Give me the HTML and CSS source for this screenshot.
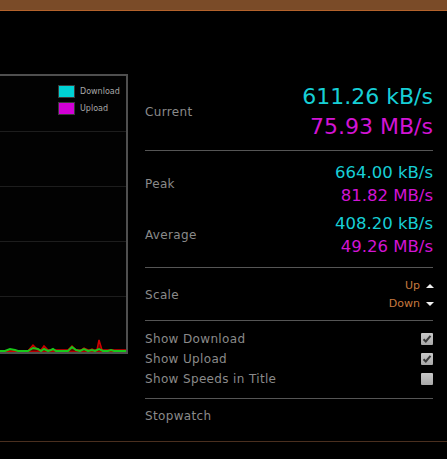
FILE: index.html
```html
<!DOCTYPE html>
<html>
<head>
<meta charset="utf-8">
<link rel="stylesheet" href="styles.css">
</head>
<body>
<div class="topbar"></div>
<div class="main">
  <div class="chart">
    <svg class="plot" width="126" height="276" viewBox="0 0 126 276">
      <g stroke="#1d1d1d" stroke-width="1">
        <line x1="0" y1="55.5" x2="126" y2="55.5"/>
        <line x1="0" y1="110.5" x2="126" y2="110.5"/>
        <line x1="0" y1="165.5" x2="126" y2="165.5"/>
        <line x1="0" y1="220.5" x2="126" y2="220.5"/>
      </g>
      <polygon fill="#6a0000" stroke="#d00000" stroke-width="1.5" points="0,275 28,275 33,269 38,274 41,274 44,270 48,274 68,274 72,270 76,274 81,274 84,272 88,274 90,274 92,273 94,274 97,274 99,264 102,274 126,274 126,276 0,276"/>
      <polyline fill="none" stroke="#18c818" stroke-width="2" points="0,275 5,275 10,273 15,274 18,275 28,275 33,272 38,273 41,275 44,273 48,275 51,274 53,273 56,275 68,275 72,271 76,274 80,275 84,273 88,275 92,274 95,275 99,273 103,275 108,275 111,274 114,275 126,275"/>
    </svg>
    <div class="legend">
      <div class="legend-item"><span class="swatch swatch-down"></span><span>Download</span></div>
      <div class="legend-item"><span class="swatch swatch-up"></span><span>Upload</span></div>
    </div>
  </div>
  <div class="panel">
    <div class="section sec-current">
      <div class="row">
        <div class="label">Current</div>
        <div class="values big">
          <div class="cyan">611.26 kB/s</div>
          <div class="magenta">75.93 MB/s</div>
        </div>
      </div>
    </div>
    <div class="section sec-stats">
      <div class="row">
        <div class="label">Peak</div>
        <div class="values mid">
          <div class="cyan">664.00 kB/s</div>
          <div class="magenta">81.82 MB/s</div>
        </div>
      </div>
      <div class="row">
        <div class="label">Average</div>
        <div class="values mid">
          <div class="cyan">408.20 kB/s</div>
          <div class="magenta">49.26 MB/s</div>
        </div>
      </div>
    </div>
    <div class="section sec-scale">
      <div class="row">
        <div class="label">Scale</div>
        <div class="values small">
          <div class="scale-btn">Up <span class="tri tri-up"></span></div>
          <div class="scale-btn">Down <span class="tri tri-down"></span></div>
        </div>
      </div>
    </div>
    <div class="section sec-checks">
      <div class="check-row"><span class="label">Show Download</span><span class="cb checked"><svg width="10" height="10" viewBox="0 0 10 10"><path d="M1.5 5.2 L3.8 7.5 L8.5 1.8" fill="none" stroke="#3a3a3a" stroke-width="2"/></svg></span></div>
      <div class="check-row"><span class="label">Show Upload</span><span class="cb checked"><svg width="10" height="10" viewBox="0 0 10 10"><path d="M1.5 5.2 L3.8 7.5 L8.5 1.8" fill="none" stroke="#3a3a3a" stroke-width="2"/></svg></span></div>
      <div class="check-row"><span class="label">Show Speeds in Title</span><span class="cb"></span></div>
    </div>
    <div class="section sec-stopwatch">
      <div class="check-row"><span class="label">Stopwatch</span></div>
    </div>
  </div>
</div>
</body>
</html>
```
FILE: styles.css
```css
html, body {
  margin: 0;
  padding: 0;
  background: #000;
}
body {
  width: 447px;
  height: 459px;
  overflow: hidden;
  font-family: "DejaVu Sans", sans-serif;
}
.topbar {
  height: 10px;
  background: #7a4b28;
  border-bottom: 1px solid #b3622b;
}
.main {
  display: flex;
  gap: 17px;
  height: 430px;
  border-bottom: 1px solid #4a2f1f;
}
.chart {
  position: relative;
  margin-top: 63px;
  width: 126px;
  height: 276px;
  border-top: 2px solid #4f4f4f;
  border-right: 2px solid #4f4f4f;
  border-bottom: 2px solid #4f4f4f;
  background: #020202;
}
.plot {
  display: block;
}
.legend {
  position: absolute;
  top: 9px;
  left: 58px;
  display: flex;
  flex-direction: column;
  gap: 4px;
}
.legend-item {
  display: flex;
  align-items: center;
  gap: 5px;
  font-size: 8px;
  color: #a8a8a8;
  height: 13px;
}
.swatch {
  width: 15px;
  height: 11px;
  border: 1px solid #3a3a3a;
}
.swatch-down { background: #00d2d4; }
.swatch-up { background: #d200d6; }
.panel {
  width: 288px;
  padding-top: 71px;
}
.section {
  border-bottom: 1px solid #555;
}
.sec-current { padding: 0 0 8px; }
.sec-stats {
  padding: 10px 0 9px;
  display: flex;
  flex-direction: column;
  gap: 5px;
}
.sec-scale { padding: 9px 0 7px; }
.sec-checks { padding: 8px 0 9px; }
.sec-stopwatch { padding: 7px 0 0; border-bottom: none; }
.row {
  display: flex;
  justify-content: space-between;
  align-items: center;
}
.label {
  font-size: 12px;
  letter-spacing: 0.35px;
  color: #8a8a8a;
}
.values {
  text-align: right;
}
.values.big {
  font-size: 22px;
  line-height: 30px;
}
.values.mid {
  font-size: 16.5px;
  line-height: 23px;
}
.values.small {
  font-size: 11px;
  line-height: 18px;
}
.cyan { color: #17cfd6; }
.magenta { color: #d214d4; }
.scale-btn {
  color: #c8793f;
  display: flex;
  align-items: center;
  justify-content: flex-end;
  gap: 6px;
}
.tri {
  width: 0;
  height: 0;
  border-left: 4px solid transparent;
  border-right: 4px solid transparent;
  margin-right: -1px;
}
.tri-up { border-bottom: 4px solid #f0f0f0; }
.tri-down { border-top: 4px solid #f0f0f0; }
.check-row {
  display: flex;
  justify-content: space-between;
  align-items: center;
  height: 20px;
}
.cb {
  width: 12px;
  height: 12px;
  background: linear-gradient(#c8c8c8, #a8a8a8);
  border-radius: 1px;
  display: flex;
  align-items: center;
  justify-content: center;
}
.cb svg { display: block; }
```
